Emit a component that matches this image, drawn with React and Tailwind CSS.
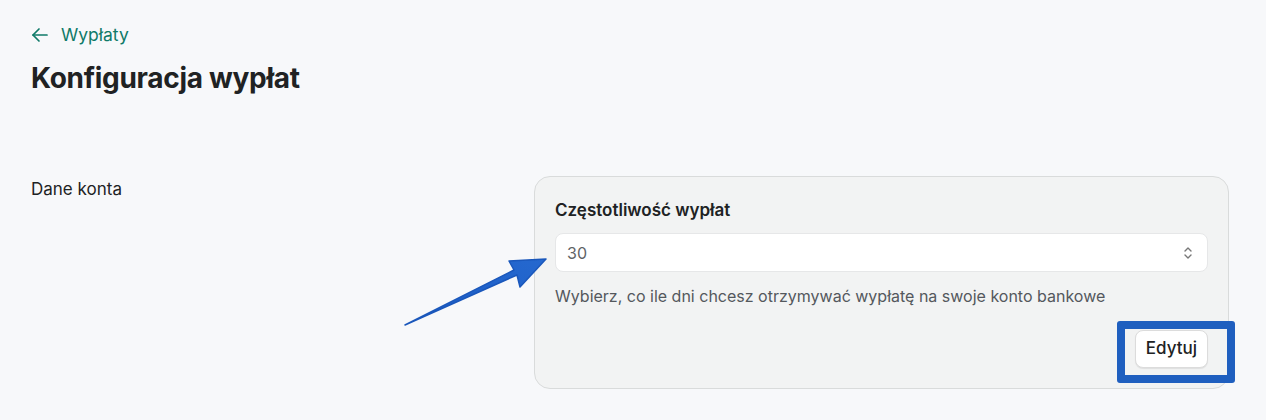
import React from "react";

export default function App() {
  return (
    <div
      className="relative min-h-[420px] w-full bg-[#f7f8fa] text-[#202223]"
      style={{ fontFamily: "Inter, 'Noto Sans', sans-serif" }}
    >
      <div className="pl-[31px] pr-[37px] pt-[24px]">
        <a className="flex items-center gap-[12px] text-[17.5px] leading-[22px] text-[#0f7a68]">
          <svg width="18" height="18" viewBox="0 0 18 18" fill="none" stroke="currentColor" strokeWidth="1.7" strokeLinecap="round" strokeLinejoin="round">
            <path d="M16 9H2" />
            <path d="M8 15L2 9l6-6" />
          </svg>
          <span>Wypłaty</span>
        </a>
        <h1 className="mt-[14px] text-[28px] font-bold leading-[36px] tracking-[-0.3px] text-[#202223]">
          Konfiguracja wypłat
        </h1>

        <div className="mt-[80px] flex">
          <div className="flex-1 pt-[2px] text-[17px] leading-[22px] text-[#202223]">Dane konta</div>
          <div className="w-[695px] rounded-[16px] border border-[#d9dbdb] bg-[#f2f3f3] px-[20px] pt-[22px] pb-[20px]">
            <div className="text-[17px] font-semibold leading-[22px] text-[#202223]">Częstotliwość wypłat</div>
            <div className="mt-[12px] flex h-[39px] items-center justify-between rounded-[8px] border border-[#e6e7e8] bg-white pl-[11px] pr-[14px]">
              <span className="text-[16px] text-[#616366]">30</span>
              <svg width="10" height="16" viewBox="0 0 10 16" fill="none" stroke="#777" strokeWidth="1.4" strokeLinecap="round" strokeLinejoin="round">
                <path d="M2 6l3-3 3 3" />
                <path d="M2 10l3 3 3-3" />
              </svg>
            </div>
            <div className="mt-[12px] text-[16px] leading-[24px] text-[#54585d]">
              Wybierz, co ile dni chcesz otrzymywać wypłatę na swoje konto bankowe
            </div>
            <div className="mt-[22px] flex justify-end">
              <div className="relative">
                <button className="h-[38px] rounded-[8px] border border-[#dcdcdc] bg-white px-[10px] text-[17px] font-medium text-[#202223] shadow-[0_1px_1px_rgba(0,0,0,0.08)]">
                  Edytuj
                </button>
                <div className="pointer-events-none absolute left-[-18px] top-[-9px] h-[62px] w-[118px] rounded-[3px] border-[8px] border-[#1f5fbf]" />
              </div>
            </div>
          </div>
        </div>
      </div>

      <svg className="pointer-events-none absolute left-0 top-0" width="1266" height="420">
        <defs>
          <linearGradient id="ag" x1="0" y1="1" x2="1" y2="0">
            <stop offset="0" stopColor="#1a5bc4" />
            <stop offset="1" stopColor="#2568cf" />
          </linearGradient>
        </defs>
        <polygon
          points="405,325 517,275 520,287 546,259 509,261 514,270"
          fill="url(#ag)"
          stroke="#1a57bb"
          strokeWidth="1.5"
          strokeLinejoin="round"
        />
      </svg>
    </div>
  );
}
